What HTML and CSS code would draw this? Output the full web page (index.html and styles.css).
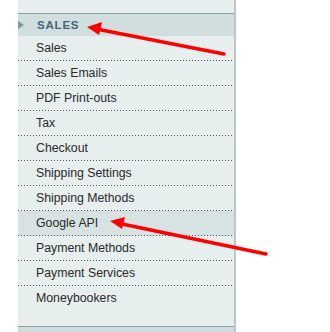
FILE: index.html
```html
<!DOCTYPE html>
<html lang="en">

<head>
    <meta charset="UTF-8">
    <meta name="viewport" content="width=device-width, initial-scale=1.0">
    <title>Sales Config</title>
    <link rel="stylesheet" href="styles.css">
</head>

<body>
    <div class="config-nav">
        <div class="section-head">
            <span class="head-arrow"></span>
            <span class="head-title">Sales</span>
        </div>
        <ul class="section-items">
            <li>Sales</li>
            <li>Sales Emails</li>
            <li>PDF Print-outs</li>
            <li>Tax</li>
            <li>Checkout</li>
            <li>Shipping Settings</li>
            <li>Shipping Methods</li>
            <li class="current">Google API</li>
            <li>Payment Methods</li>
            <li>Payment Services</li>
            <li class="last">Moneybookers</li>
        </ul>
        <div class="nav-foot"></div>
    </div>

    <!-- annotation arrows -->
    <svg class="callouts" width="330" height="332" viewBox="0 0 330 332">
        <line x1="99" y1="29.5" x2="224" y2="54" stroke="#f00" stroke-width="3.5" stroke-linecap="round" />
        <polygon points="87,27 102,22 99,35" fill="#f00" />
        <line x1="122" y1="224" x2="266" y2="254" stroke="#f00" stroke-width="3.5" stroke-linecap="round" />
        <polygon points="110,221 125,217 122,229" fill="#f00" />
    </svg>
</body>

</html>
```

FILE: styles.css
```css
html,
body {
    margin: 0;
    padding: 0;
}

body {
    width: 330px;
    height: 332px;
    background: #fff;
    overflow: hidden;
    position: relative;
    font-family: "Liberation Sans", Arial, sans-serif;
}

.config-nav {
    margin-left: 18px;
    width: 218px;
    height: 332px;
    padding-top: 13px;
    box-sizing: border-box;
    background: #e6eeee;
    border-right: 2px solid #b9c6c7;
    display: flex;
    flex-direction: column;
}

.section-head {
    height: 22px;
    border-top: 1px solid #8c9fa4;
    background: #d1dedf;
    display: flex;
    align-items: center;
}

.head-arrow {
    width: 0;
    height: 0;
    border-top: 4px solid transparent;
    border-bottom: 4px solid transparent;
    border-left: 6px solid #7c979e;
    margin-right: 13px;
}

.head-title {
    font-size: 11.5px;
    font-weight: bold;
    letter-spacing: 0.8px;
    text-transform: uppercase;
    color: #436679;
}

ul.section-items {
    list-style: none;
    margin: 0;
    padding: 0;
}

.section-items li {
    height: 24px;
    line-height: 24px;
    padding-left: 18px;
    padding-bottom: 1px;
    font-size: 12.3px;
    color: #2a2a2a;
    /* 1px dots, 3px apart */
    background-image: linear-gradient(to right, #5a5a5a 1px, transparent 1px);
    background-size: 3px 1px;
    background-repeat: repeat-x;
    background-position: 0 100%;
}

.section-items li.current {
    background-color: #d7e3e3;
}

.section-items li.last {
    background-image: none;
}

.nav-foot {
    margin-top: auto;
    height: 5px;
    border-top: 1px solid #8a9da2;
    background: #d0dcdd;
}

.callouts {
    position: absolute;
    left: 0;
    top: 0;
}
```
